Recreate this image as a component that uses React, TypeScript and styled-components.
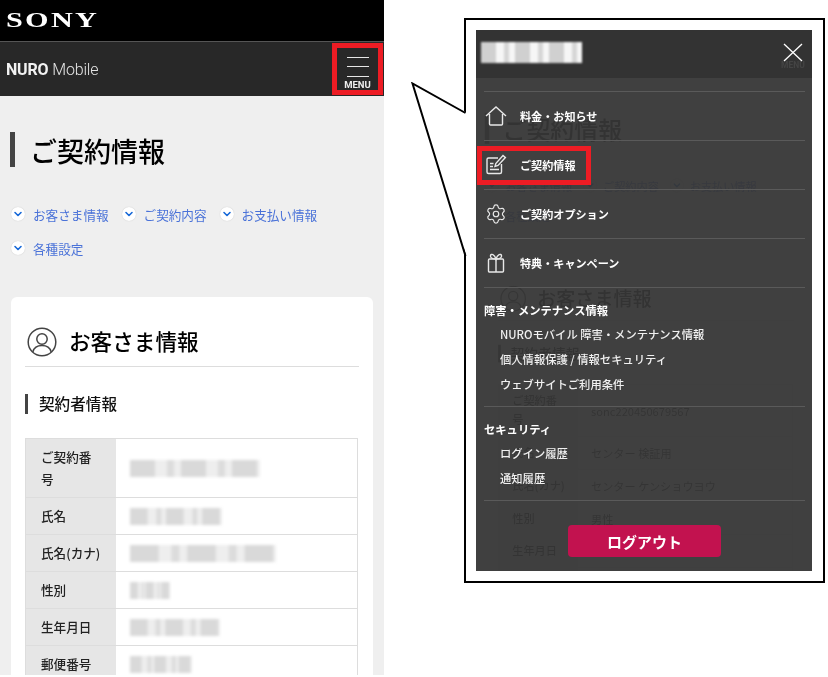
import styled, { createGlobalStyle } from "styled-components";
import { ChevronDown, Settings } from "lucide-react";

const FONT = `"Noto Sans CJK JP", "Noto Sans", sans-serif`;

const rows = [
    { label: "ご契約番号", value: "sonc220450679567", blur: 130, tall: true },
    { label: "氏名", value: "センター 検証用", blur: 92 },
    { label: "氏名(カナ)", value: "センター ケンショウヨウ", blur: 146 },
    { label: "性別", value: "男性", blur: 40 },
    { label: "生年月日", value: "", blur: 90 },
    { label: "郵便番号", value: "", blur: 62 },
];

function HomeIcon() {
    return (
        <svg width="22" height="20" viewBox="0 0 22 20" fill="none" stroke="#e8e8e8" strokeWidth="1.4">
            <path d="M1 10 L11 1 L21 10 M4.5 8 V18 a1 1 0 0 0 1 1 H16.5 a1 1 0 0 0 1 -1 V8" />
        </svg>
    );
}

function ContractIcon() {
    return (
        <svg width="22" height="21" viewBox="0 0 22 21" fill="none" stroke="#e8e8e8" strokeWidth="1.4">
            <path d="M13 4 H3.5 a1.5 1.5 0 0 0 -1.5 1.5 V18 a1.5 1.5 0 0 0 1.5 1.5 H15 a1.5 1.5 0 0 0 1.5 -1.5 V10" />
            <path d="M10 12.5 L10.8 9.5 L18 1.5 L20.4 3.6 L13 11.5 Z" />
            <path d="M5 9.5 H8.5 M5 12.5 H8 M5 15.5 H14" />
        </svg>
    );
}

function GiftIcon() {
    return (
        <svg width="18" height="20" viewBox="0 0 18 20" fill="none" stroke="#e8e8e8" strokeWidth="1.4">
            <rect x="1.5" y="6" width="15" height="13" rx="1" />
            <path d="M9 6 V19" />
            <path d="M9 6 C5 6 3 4.5 3.5 2.5 C4 .5 7.5 1 9 6 C10.5 1 14 .5 14.5 2.5 C15 4.5 13 6 9 6 Z" />
        </svg>
    );
}

function UserIcon() {
    return (
        <svg width="30" height="30" viewBox="0 0 30 30" fill="none" stroke="#444" strokeWidth="1.5">
            <circle cx="15" cy="15" r="13.8" />
            <circle cx="15" cy="12" r="5.2" />
            <path d="M5.8 25 C7 20.5 10.5 18.6 15 18.6 C19.5 18.6 23 20.5 24.2 25" />
        </svg>
    );
}

function PageBody({ masked }: { masked: boolean }) {
    return (
        <Body>
            <TitleRow>ご契約情報</TitleRow>
            <LinkList>
                {["お客さま情報", "ご契約内容", "お支払い情報", "各種設定"].map((t) => (
                    <LinkItem key={t}>
                        <LinkDot>
                            <ChevronDown size={12} strokeWidth={3.2} color="#1668d8" />
                        </LinkDot>
                        {t}
                    </LinkItem>
                ))}
            </LinkList>
            <Card>
                <CardHead>
                    <UserIcon />
                    <CardTitle>お客さま情報</CardTitle>
                </CardHead>
                <SubTitle>契約者情報</SubTitle>
                <InfoTable>
                    {rows.map((r) => (
                        <InfoRow key={r.label} $tall={r.tall}>
                            <InfoLabel>{r.label}</InfoLabel>
                            <InfoValue>
                                {masked ? <Smudge $w={r.blur} /> : r.value}
                            </InfoValue>
                        </InfoRow>
                    ))}
                </InfoTable>
            </Card>
        </Body>
    );
}

export default function App() {
    return (
        <Page>
            <GlobalStyle />
            <Phone>
                <SonyBar>
                    <SonyLogo>SONY</SonyLogo>
                </SonyBar>
                <SiteHeader>
                    <Brand>
                        <b>NURO</b>Mobile
                    </Brand>
                    <MenuButton>
                        <MenuLine />
                        <MenuLine />
                        <MenuLine />
                        <MenuLabel>MENU</MenuLabel>
                    </MenuButton>
                </SiteHeader>
                <PageBody masked />
            </Phone>

            <Frame>
                <Tail width="57" height="178" viewBox="0 0 57 178">
                    <polygon points="1.5,1.5 56,31 56,176" fill="#fff" />
                    <polyline points="54.5,31 1.5,1.5 54.5,174" fill="none" stroke="#000" strokeWidth="2" />
                </Tail>
                <MenuPanel>
                    <Ghost>
                        <PageBody masked={false} />
                    </Ghost>
                    <Veil />
                    <MenuContent>
                        <MenuHeader>
                            <NameSmudge />
                            <CloseButton>
                                <svg width="20" height="20" viewBox="0 0 20 20" stroke="#fff" strokeWidth="1.3">
                                    <path d="M1 1 L19 18 M19 1 L1 18" />
                                </svg>
                                <GhostMenu>MENU</GhostMenu>
                            </CloseButton>
                        </MenuHeader>
                        <NavList>
                            <NavRow>
                                <NavIcon><HomeIcon /></NavIcon>料金・お知らせ
                            </NavRow>
                            <NavRow>
                                <Highlight />
                                <NavIcon><ContractIcon /></NavIcon>ご契約情報
                            </NavRow>
                            <NavRow>
                                <NavIcon><Settings size={22} strokeWidth={1.3} color="#e8e8e8" /></NavIcon>ご契約オプション
                            </NavRow>
                            <NavRow>
                                <NavIcon><GiftIcon /></NavIcon>特典・キャンペーン
                            </NavRow>
                        </NavList>
                        <Section>
                            <SectionTitle>障害・メンテナンス情報</SectionTitle>
                            <SectionLink>NUROモバイル 障害・メンテナンス情報</SectionLink>
                            <SectionLink>個人情報保護 / 情報セキュリティ</SectionLink>
                            <SectionLink>ウェブサイトご利用条件</SectionLink>
                        </Section>
                        <Section>
                            <SectionTitle>セキュリティ</SectionTitle>
                            <SectionLink>ログイン履歴</SectionLink>
                            <SectionLink>通知履歴</SectionLink>
                        </Section>
                        <LogoutButton>ログアウト</LogoutButton>
                    </MenuContent>
                </MenuPanel>
            </Frame>
        </Page>
    );
}

const GlobalStyle = createGlobalStyle`
    html, body {
        margin: 0;
        background: #fff;
    }
    * {
        box-sizing: border-box;
    }
`;

const Page = styled.div`
    display: flex;
    align-items: flex-start;
    width: 828px;
    height: 677px;
    overflow: hidden;
    background: #fff;
    font-family: ${FONT};
    filter: blur(0.3px);
`;

const Phone = styled.div`
    flex: none;
    width: 384px;
    height: 675px;
    overflow: hidden;
    background: #efefef;
`;

const SonyBar = styled.div`
    display: flex;
    align-items: center;
    height: 41px;
    padding-left: 6px;
    background: #000;
    border-bottom: 1px solid #555;
    box-sizing: content-box;
`;

const SonyLogo = styled.span`
    display: inline-block;
    font-family: "Liberation Serif", serif;
    font-weight: 700;
    font-size: 21px;
    letter-spacing: 1.6px;
    color: #fff;
    transform: scaleX(1.44);
    transform-origin: left center;
`;

const SiteHeader = styled.div`
    display: flex;
    align-items: center;
    justify-content: space-between;
    height: 54px;
    padding: 1px 1px 1px 6px;
    background: #282828;
`;

const Brand = styled.div`
    font-family: "Roboto", sans-serif;
    font-size: 16px;
    font-weight: 300;
    letter-spacing: -0.2px;
    color: #e4e4e4;

    b {
        margin-right: 4px;
        font-weight: 700;
        color: #f2f2f2;
    }
`;

const MenuButton = styled.div`
    display: flex;
    flex-direction: column;
    align-items: center;
    width: 51px;
    height: 52px;
    padding-top: 9px;
    border: 5px solid #ed1c24;
`;

const MenuLine = styled.span`
    width: 22px;
    height: 1px;
    margin-bottom: 8.5px;
    background: #e6e6e6;
`;

const MenuLabel = styled.span`
    margin-top: -5px;
    font-family: "Roboto", sans-serif;
    font-size: 9.5px;
    font-weight: 700;
    line-height: 10px;
    color: #eee;
`;

const Body = styled.div`
    width: 384px;
    padding: 36px 11px 0;
`;

const TitleRow = styled.h1`
    height: 35px;
    margin: 0 0 0 -1px;
    padding-left: 15px;
    border-left: 5px solid #444;
    font-size: 27px;
    font-weight: 500;
    line-height: 38px;
    color: #000;
`;

const LinkList = styled.div`
    display: flex;
    flex-wrap: wrap;
    gap: 14px 13px;
    margin-top: 37px;
`;

const LinkItem = styled.div`
    display: flex;
    align-items: center;
    gap: 8px;
    height: 20px;
    font-size: 12.6px;
    color: #4a72d8;
`;

const LinkDot = styled.span`
    display: flex;
    align-items: center;
    justify-content: center;
    width: 14px;
    height: 14px;
    border-radius: 50%;
    background: #fff;
    box-shadow: 0 0 1px #bbb;
`;

const Card = styled.div`
    margin-top: 39px;
    padding: 31px 14px 0;
    border-radius: 6px;
    background: #fff;
    height: 420px;
`;

const CardHead = styled.div`
    display: flex;
    align-items: center;
    gap: 12px;
    height: 39px;
    padding: 0 0 11px 2px;
    border-bottom: 1px solid #ddd;
`;

const CardTitle = styled.h2`
    margin: -2px 0 0;
    font-size: 21.6px;
    font-weight: 500;
    color: #000;
`;

const SubTitle = styled.h3`
    height: 20px;
    margin: 27px 0 24px;
    padding-left: 11px;
    border-left: 3px solid #444;
    font-size: 15.6px;
    font-weight: 500;
    line-height: 18px;
    color: #111;
`;

const InfoTable = styled.div`
    width: 333px;
    border: solid #ddd;
    border-width: 1px 1px 0;
`;

const InfoRow = styled.div<{ $tall?: boolean }>`
    display: grid;
    grid-template-columns: 90px 1fr;
    min-height: ${(p) => (p.$tall ? 59 : 37)}px;
    border-bottom: 1px solid #ddd;
`;

const InfoLabel = styled.div`
    display: flex;
    align-items: center;
    padding: 0 15px;
    background: #e6e6e6;
    font-size: 12.6px;
    font-weight: 500;
    line-height: 22px;
    color: #222;
`;

const InfoValue = styled.div`
    display: flex;
    align-items: center;
    padding-left: 14px;
    font-size: 12.6px;
    color: #222;
`;

// the blurred-out values: wide block, gap, thin block, gap, repeated
const Smudge = styled.span<{ $w: number }>`
    display: block;
    width: ${(p) => p.$w}px;
    height: 17px;
    background-color: #eeeeee;
    background-image: linear-gradient(
        90deg,
        #d9d9d9 0 50%,
        #eeeeee 50% 72%,
        #dcdcdc 72% 86%,
        #eeeeee 86% 100%
    );
    background-size: ${(p) => p.$w / 2.55}px 100%;
    filter: blur(1.8px);
`;

const Frame = styled.div`
    position: relative;
    flex: none;
    width: 361px;
    height: 565px;
    margin: 18px 0 0 80px;
    padding: 10px 11px 10px 10px;
    border: 2px solid #000;
    background: #fff;
`;

const Tail = styled.svg`
    position: absolute;
    left: -55.5px;
    top: 62px;
`;

const MenuPanel = styled.div`
    position: relative;
    height: 100%;
    overflow: hidden;
    background: #efefef;
`;

const Ghost = styled.div`
    position: absolute;
    left: 0;
    top: 51px;
    transform: scale(0.885);
    transform-origin: top left;
`;

const Veil = styled.div`
    position: absolute;
    inset: 0;
    background: rgba(54, 54, 54, 0.95);
`;

const MenuContent = styled.div`
    position: relative;
    display: flex;
    flex-direction: column;
    height: 100%;
`;

const MenuHeader = styled.div`
    display: flex;
    align-items: center;
    justify-content: space-between;
    height: 48px;
    padding: 0 9px 3px 5px;
    background: #333;
`;

const NameSmudge = styled.span`
    width: 101px;
    height: 21px;
    background-color: #f6f6f6;
    background-image: linear-gradient(
        90deg,
        #d0d0d0 0 45%,
        #f6f6f6 45% 68%,
        #d6d6d6 68% 82%,
        #f6f6f6 82% 100%
    );
    background-size: 34px 100%;
    filter: blur(1px);
`;

const CloseButton = styled.div`
    position: relative;
    height: 20px;
`;

const GhostMenu = styled.span`
    position: absolute;
    left: -2px;
    top: 17px;
    font-family: "Roboto", sans-serif;
    font-size: 8.5px;
    font-weight: 700;
    color: #444;
`;

const NavList = styled.div`
    margin: 13px 7px 0 8px;
    border-top: 1px solid #5a5a5a;
`;

const NavRow = styled.div`
    position: relative;
    display: flex;
    align-items: center;
    height: 49px;
    padding-bottom: 1px;
    border-bottom: 1px solid #5a5a5a;
    font-size: 11.1px;
    font-weight: 700;
    color: #fff;
`;

const NavIcon = styled.span`
    display: flex;
    justify-content: center;
    width: 24px;
    margin-right: 12px;
`;

const Highlight = styled.span`
    position: absolute;
    left: -7px;
    top: 5px;
    width: 114px;
    height: 39px;
    border: 5px solid #ed1c24;
`;

const Section = styled.div`
    display: flex;
    flex-direction: column;
    margin: 0 7px 0 8px;
    padding: 13px 0 9px;
    border-bottom: 1px solid #5a5a5a;
`;

const SectionTitle = styled.div`
    height: 21px;
    font-size: 11.3px;
    font-weight: 700;
    line-height: 18px;
    color: #fff;
`;

const SectionLink = styled.div`
    height: 25px;
    padding-left: 16px;
    font-size: 11.3px;
    font-weight: 500;
    line-height: 25px;
    color: #f0f0f0;
`;

const LogoutButton = styled.div`
    display: flex;
    align-items: center;
    justify-content: center;
    align-self: flex-start;
    width: 153px;
    height: 32px;
    margin: 24px 0 0 92px;
    border-radius: 4px;
    background: #c2124f;
    font-size: 15px;
    font-weight: 700;
    color: #fff;
`;
